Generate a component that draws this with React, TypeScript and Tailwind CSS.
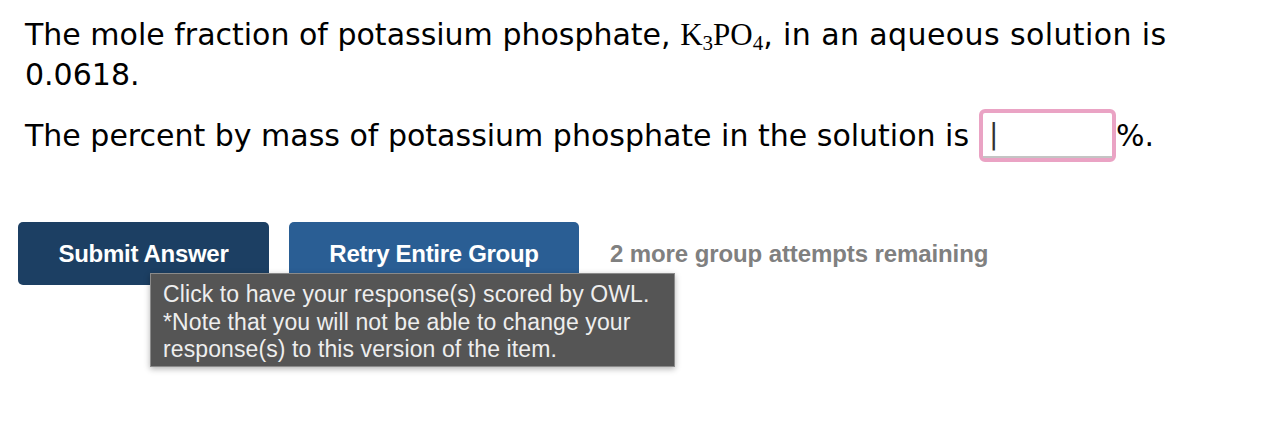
export default function App() {
  return (
    <div className="w-[1266px] h-[432px] bg-white relative">
      <div className="pl-[25px] pt-[15px] w-[1210px] text-[30px] leading-[40px] text-black" style={{ fontFamily: 'Tahoma, "DejaVu Sans", Verdana, sans-serif' }}>
        <p>
          <span>The mole fraction of potassium phosphate, </span>
          <span className="inline-flex items-start text-[31px] leading-[34px]" style={{ fontFamily: '"Liberation Serif", "DejaVu Serif", serif' }}>
            <span>K</span>
            <span className="text-[21px] leading-none mt-[15px]">3</span>
            <span>PO</span>
            <span className="text-[21px] leading-none mt-[15px]">4</span>
          </span>
          <span className="tracking-[0.4px]">, in an aqueous solution is</span>
          <br />
          <span>0.0618.</span>
        </p>
        <p className="mt-[14px] flex items-center">
          <span>The percent by mass of potassium phosphate in the solution is</span>
          <span className="ml-[10px] w-[137px] h-[53px] rounded-[6px] border-[4px] border-[#eaa3c4] bg-white flex items-center">
            <span className="h-full w-full border-b-[2px] border-[#c4c4c4] flex items-center pl-[6px] text-[28px] leading-none text-[#333]">|</span>
          </span>
          <span>%.</span>
        </p>
      </div>

      <div className="absolute left-[18px] top-[222px] flex items-center" style={{ fontFamily: '"Liberation Sans", Arial, sans-serif' }}>
        <button className="w-[251px] h-[63px] rounded-[5px] bg-[#1c3f63] text-white font-bold text-[24px] tracking-[-0.3px]">Submit Answer</button>
        <button className="ml-[20px] w-[290px] h-[63px] rounded-[5px] bg-[#2a5e94] text-white font-bold text-[24px] tracking-[-0.3px]">Retry Entire Group</button>
        <span className="ml-[31px] text-[24px] font-bold text-[#808080] tracking-[-0.1px]">2 more group attempts remaining</span>
      </div>

      <div className="absolute left-[150px] top-[273px] w-[525px] h-[94px] bg-[#555555] border border-[#8a8a8a] shadow-[0_2px_6px_rgba(0,0,0,0.3)] px-[12px] pt-[7px] text-[23px] leading-[27.5px] text-[#eeeeee] tracking-[0.1px]" style={{ fontFamily: '"Liberation Sans", Arial, sans-serif' }}>
        Click to have your response(s) scored by OWL.<br />
        *Note that you will not be able to change your<br />
        response(s) to this version of the item.
      </div>
    </div>
  )
}
